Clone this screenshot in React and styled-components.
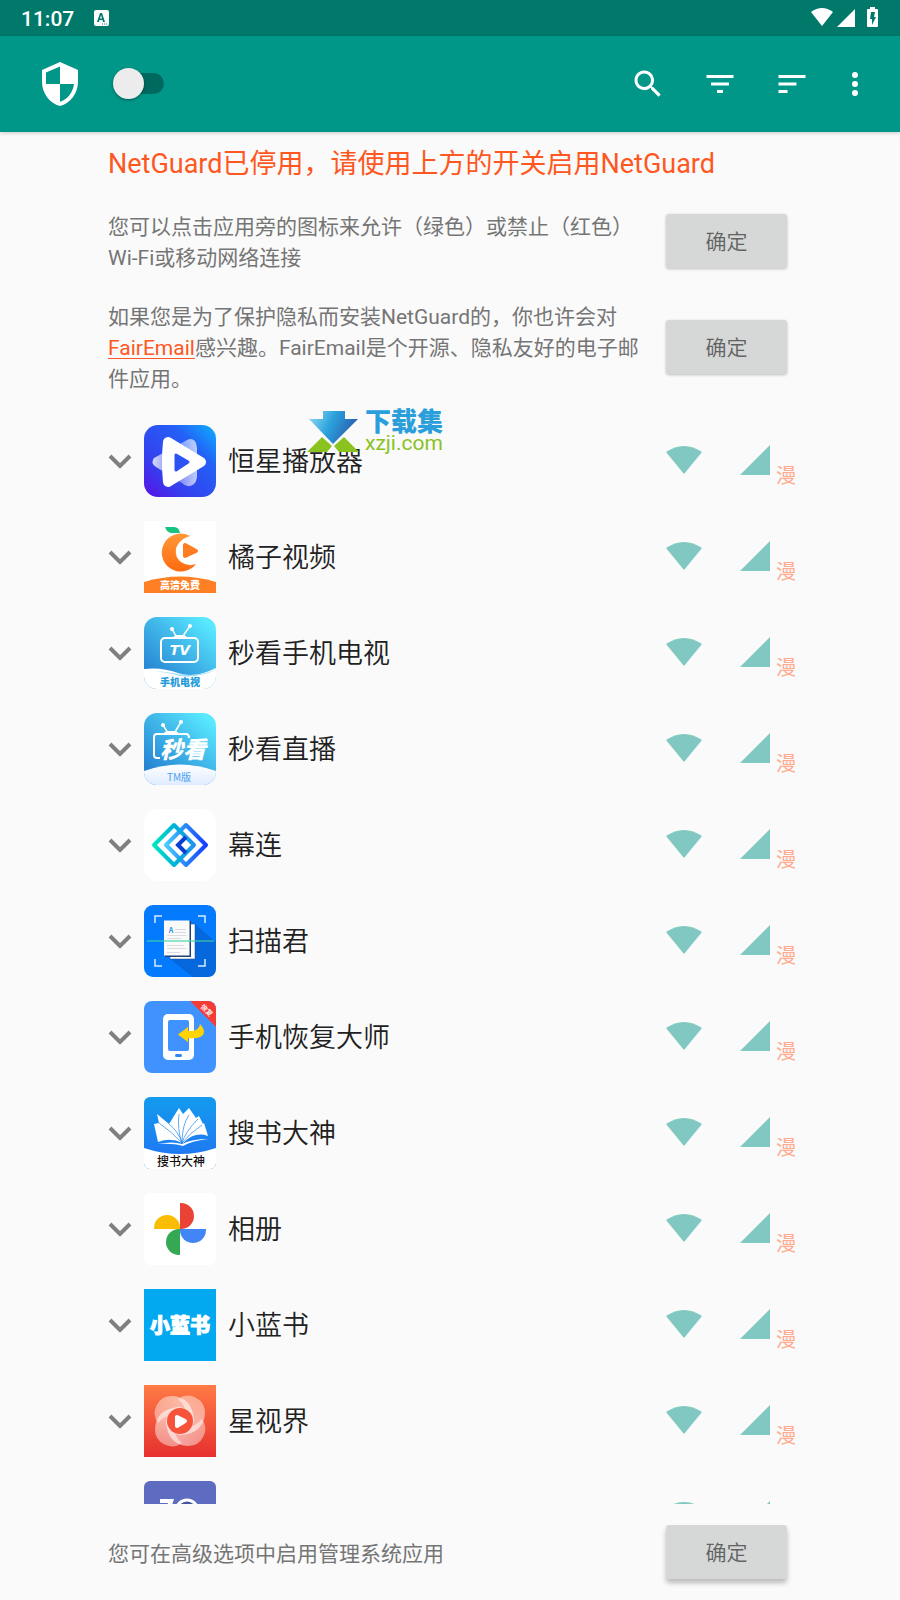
import { useState } from "react"
import styled, { createGlobalStyle } from "styled-components"

const cjk = '"Noto Sans CJK SC", sans-serif'

const StarPlayer = () => (
    <AppIcon viewBox="0 0 72 72">
        <defs>
            <linearGradient id="star" x1="0" y1="1" x2="1" y2="0">
                <stop offset="0" stopColor="#5a10e6" />
                <stop offset="0.3" stopColor="#3540ee" />
                <stop offset="0.7" stopColor="#2460f6" />
                <stop offset="1" stopColor="#0db0ff" />
            </linearGradient>
            <linearGradient id="starBack" x1="0" y1="0" x2="1" y2="0">
                <stop offset="0" stopColor="#fff" stopOpacity="0.8" />
                <stop offset="0.5" stopColor="#fff" stopOpacity="0.3" />
                <stop offset="1" stopColor="#fff" stopOpacity="0.7" />
            </linearGradient>
        </defs>
        <rect width="72" height="72" rx="14" fill="url(#star)" />
        <path d="M10 33 43 15q6-3 9 3l1 5v29q-1 8-7 9-4 1-8-3L12 42q-6-4-2-9z" fill="url(#starBack)" />
        <path d="M24 17q-2 20 0 40L57 37z" fill="#fff" stroke="#fff" strokeWidth="10" strokeLinejoin="round" />
        <path d="M32 30v15l12-8z" fill="#2d52f4" stroke="#2d52f4" strokeWidth="3" strokeLinejoin="round" />
    </AppIcon>
)

const OrangeVideo = () => (
    <AppIcon viewBox="0 0 72 72">
        <defs>
            <linearGradient id="orange" x1="0" y1="0" x2="0" y2="1">
                <stop offset="0" stopColor="#ff9838" />
                <stop offset="1" stopColor="#ff6a10" />
            </linearGradient>
        </defs>
        <rect width="72" height="72" fill="#fff" />
        <path d="M21 6h9q5 0 6 6h-8q-5 0-7-6z" fill="#16c47f" />
        <path d="M46 15a19 19 0 1 0 6 28q-8 3-15-2a13 13 0 0 1-2-19q4-5 11-7z" fill="url(#orange)" />
        <path d="M41 24v11l11-5z" fill="#ff7d22" stroke="#ff7d22" strokeWidth="4" strokeLinejoin="round" />
        <path d="M0 61q36-11 72 0v11H0z" fill="#ff8024" />
        <IconText x="36" y="68" size={10} weight={900}>高清免费</IconText>
    </AppIcon>
)

const PhoneTv = () => (
    <AppIcon viewBox="0 0 72 72">
        <defs>
            <linearGradient id="sky" x1="0.1" y1="0.8" x2="0.8" y2="0">
                <stop offset="0" stopColor="#2784d3" />
                <stop offset="0.5" stopColor="#3fb4e8" />
                <stop offset="1" stopColor="#58e9ff" />
            </linearGradient>
            <clipPath id="round"><rect width="72" height="72" rx="13" /></clipPath>
        </defs>
        <g clipPath="url(#round)">
            <rect width="72" height="72" fill="url(#sky)" />
            <path d="M0 52q18-2 34 4t38-5v21H0z" fill="#fff" />
            <path d="M0 54q20 0 34 3 18 3 38-4-18 8-36 6Q20 54 0 54z" fill="#9cdcf7" />
        </g>
        <rect x="17" y="21" width="37" height="24" rx="4" fill="none" stroke="#fff" strokeWidth="2" />
        <path d="m28 12 4 7m14-10-7 10" stroke="#fff" strokeWidth="1.5" />
        <circle cx="28" cy="12" r="2" fill="#fff" />
        <circle cx="46" cy="9" r="2" fill="#fff" />
        <path d="M29 21q1-3 4-3h6q3 0 4 3z" fill="#fff" />
        <IconText x="36" y="38" size={14} weight={700} slanted wide>TV</IconText>
        <IconText x="36" y="69" size={10} weight={900} fill="#259bdb">手机电视</IconText>
    </AppIcon>
)

const LiveTv = () => (
    <AppIcon viewBox="0 0 72 72">
        <defs>
            <linearGradient id="mist" x1="0" y1="0" x2="0" y2="1">
                <stop offset="0" stopColor="#fff" />
                <stop offset="1" stopColor="#dfebff" />
            </linearGradient>
        </defs>
        <g clipPath="url(#round)">
            <rect width="72" height="72" fill="url(#sky)" />
            <path d="M0 58q36-13 72 0v14H0z" fill="url(#mist)" />
        </g>
        <path d="M16 45h-3q-3 0-3-3V24q0-3 3-3h29q3 0 3 4" fill="none" stroke="#fff" strokeWidth="2" />
        <path d="m19 12 5 8m13-11-6 10" stroke="#fff" strokeWidth="1.5" />
        <circle cx="19" cy="12" r="2" fill="#fff" />
        <circle cx="37" cy="9" r="2" fill="#fff" />
        <path d="M19 21q2-3 5-3h6q4 0 5 3z" fill="#fff" />
        <IconText x="39" y="45" size={23} weight={900} slanted>秒看</IconText>
        <IconText x="35" y="68" size={10} weight={400} fill="#4ba2f5">TM版</IconText>
    </AppIcon>
)

const ScreenLink = () => (
    <AppIcon viewBox="0 0 72 72">
        <defs>
            <linearGradient id="teal" x1="0" y1="0" x2="1" y2="0">
                <stop offset="0" stopColor="#00e6c0" />
                <stop offset="0.5" stopColor="#00b4d8" />
                <stop offset="1" stopColor="#2492f0" />
            </linearGradient>
            <linearGradient id="blue" x1="0" y1="0" x2="1" y2="0">
                <stop offset="0" stopColor="#45ccff" />
                <stop offset="0.5" stopColor="#2b86f8" />
                <stop offset="1" stopColor="#163dff" />
            </linearGradient>
        </defs>
        <rect width="72" height="72" rx="14" fill="#fff" />
        <path d="m42 16 20 20-20 20-20-20z" fill="none" stroke="url(#blue)" strokeWidth="4" strokeLinejoin="round" />
        <path d="m30 16 20 20-20 20-20-20z" fill="none" stroke="url(#teal)" strokeWidth="4" strokeLinejoin="round" />
        <path d="m42 28-8 8 8 8" fill="none" stroke="#0b3fd4" strokeWidth="4" />
    </AppIcon>
)

const Scanner = () => (
    <AppIcon viewBox="0 0 72 72">
        <rect width="72" height="72" rx="9" fill="#047bff" />
        <path d="m51 19 21 18v26q0 9-9 9H49L26 54z" fill="#0567dc" />
        <path d="M11 18v-7h7m36 0h7v7m0 36v7h-7m-36 0h-7v-7" fill="none" stroke="#d5ecff" strokeWidth="1.5" />
        <path d="M26 19h25v35H26z" fill="#fff" stroke="#234a80" strokeWidth="0.5" />
        <path d="M21 16h26v36H21z" fill="#1f4372" />
        <path d="M20 15.5h25.5v35H20z" fill="#fafafa" />
        <path d="M31 24.5h11m-11 3h11m-19 3h19m-19 3h14m-14 7h17m-17 3h19m-19 4h13" stroke="#dcdce0" strokeWidth="1" />
        <IconText x="27" y="28" size={7} weight={700} fill="#1695e8">A</IconText>
        <path d="M3 36h67" stroke="#3bd5a0" strokeWidth="1.5" opacity="0.75" />
    </AppIcon>
)

const PhoneRestore = () => (
    <AppIcon viewBox="0 0 72 72">
        <defs>
            <clipPath id="corner"><rect width="72" height="72" rx="8" /></clipPath>
        </defs>
        <rect width="72" height="72" rx="8" fill="#4093ff" />
        <path d="M46 0h26v26z" fill="#f53b36" clipPath="url(#corner)" />
        <rect x="19" y="13" width="31" height="46" rx="5" fill="#fff" />
        <rect x="24" y="19" width="21" height="31" rx="2" fill="#4093ff" />
        <rect x="31" y="53" width="7" height="3" rx="1.5" fill="#2e85fa" />
        <path d="m34 33.5 10-7.5v4q11 1 12-7 8 9 0 13-4 2-12 1v4z" fill="#ffd400" />
        <g transform="rotate(45 63 9)">
            <IconText x="63" y="12" size={7} weight={500}>恢复</IconText>
        </g>
    </AppIcon>
)

const BookSearch = () => (
    <AppIcon viewBox="0 0 72 72">
        <defs>
            <linearGradient id="book" x1="0" y1="0" x2="0" y2="1">
                <stop offset="0" stopColor="#139bee" />
                <stop offset="0.8" stopColor="#1f79f2" />
            </linearGradient>
            <clipPath id="bookClip"><rect width="72" height="72" rx="6" /></clipPath>
        </defs>
        <g clipPath="url(#bookClip)">
            <rect width="72" height="72" fill="url(#book)" />
            <path d="M0 51q36 12 72 0v21H0z" fill="#fff" />
        </g>
        <path d="M38 46q-11-6-24-1L10 27l5-1-2-9 12 10 10-16 4 6 6-6 7 10 3-2 4 8 1-1 4 13q-13-5-25 7z" fill="#fff" />
        <path d="M14 47q15-3 24 0 10-5 26-5-17 2-25 7-10-3-25-2z" fill="#fff" />
        <path d="M38 46q-4-12-13-19m13 19q-11-12-23-20m23 20q-5-14-3-29m3 29q0-18 7-28m-7 28q3-11 16-24m-16 24q8-10 20-18" fill="none" stroke="#1d84ee" strokeWidth="0.7" />
        <IconText x="37" y="69" size={12} weight={500} fill="#111">搜书大神</IconText>
    </AppIcon>
)

const Photos = () => (
    <AppIcon viewBox="0 0 72 72">
        <rect width="72" height="72" rx="6" fill="#fff" />
        <path d="M36 10h1a13 13 0 0 1 0 26h-1z" fill="#ea4335" />
        <path d="M10 36v-1a13 13 0 0 1 26 0v1z" fill="#fbbc04" />
        <path d="M36 36h26v1a13 13 0 0 1-26 0z" fill="#4285f4" />
        <path d="M36 36v26h-1a13 13 0 0 1 0-26z" fill="#34a853" />
    </AppIcon>
)

const BlueBook = () => (
    <AppIcon viewBox="0 0 72 72">
        <rect width="72" height="72" fill="#02a9f0" />
        <IconText x="36" y="44" size={20} weight={900} outlined>小蓝书</IconText>
    </AppIcon>
)

const StarView = () => (
    <AppIcon viewBox="0 0 72 72">
        <defs>
            <linearGradient id="fire" x1="0" y1="0" x2="0" y2="1">
                <stop offset="0" stopColor="#ff7b45" />
                <stop offset="1" stopColor="#e6302f" />
            </linearGradient>
            <linearGradient id="petal" x1="0" y1="0" x2="1" y2="0.3">
                <stop offset="0" stopColor="#fff" stopOpacity="0.4" />
                <stop offset="1" stopColor="#fff" stopOpacity="0.6" />
            </linearGradient>
        </defs>
        <rect width="72" height="72" fill="url(#fire)" />
        {[0, 90, 180, 270].map((angle) => (
            <path
                key={angle}
                d="M14 38a17 17 0 0 1 14-27q20 1 22 24-1 6-4 9-4-15-18-14-8 1-14 8z"
                fill="url(#petal)"
                transform={`rotate(${angle} 36 36)`}
            />
        ))}
        <circle cx="36" cy="36" r="13" fill="#f6533a" />
        <path d="M33 32v9l8-5z" fill="#fff" stroke="#fff" strokeWidth="4" strokeLinejoin="round" />
    </AppIcon>
)

const SevenZip = () => (
    <AppIcon viewBox="0 0 72 72">
        <rect width="72" height="72" rx="6" fill="#5d6bc0" />
        <circle cx="43" cy="30" r="11" fill="#4653a0" stroke="#fff" strokeWidth="3" />
        <path d="M16 18h14L20 48h-5l9-26h-8z" fill="#fff" />
    </AppIcon>
)

const apps = [
    { name: "恒星播放器", Icon: StarPlayer },
    { name: "橘子视频", Icon: OrangeVideo },
    { name: "秒看手机电视", Icon: PhoneTv },
    { name: "秒看直播", Icon: LiveTv },
    { name: "幕连", Icon: ScreenLink },
    { name: "扫描君", Icon: Scanner },
    { name: "手机恢复大师", Icon: PhoneRestore },
    { name: "搜书大神", Icon: BookSearch },
    { name: "相册", Icon: Photos },
    { name: "小蓝书", Icon: BlueBook },
    { name: "星视界", Icon: StarView },
    { name: "", Icon: SevenZip },
]

const actions = [
    { label: "搜索", d: "M15.5 14h-.79l-.28-.27C15.41 12.59 16 11.11 16 9.5 16 5.91 13.09 3 9.5 3S3 5.91 3 9.5 5.91 16 9.5 16c1.61 0 3.09-.59 4.23-1.57l.27.28v.79l5 4.99L20.49 19l-4.99-5zm-6 0C7.01 14 5 11.99 5 9.5S7.01 5 9.5 5 14 7.01 14 9.5 11.99 14 9.5 14z" },
    { label: "筛选", d: "M10 18h4v-2h-4v2zM3 6v2h18V6H3zm3 7h12v-2H6v2z" },
    { label: "排序", d: "M3 18h6v-2H3v2zM3 6v2h18V6H3zm0 7h12v-2H3v2z" },
    { label: "更多", narrow: true, d: "M12 8a2 2 0 1 0 0-4 2 2 0 0 0 0 4zm0 2a2 2 0 1 0 0 4 2 2 0 0 0 0-4zm0 6a2 2 0 1 0 0 4 2 2 0 0 0 0-4z" },
]

const StatusIcons = () => (
    <svg width="68" height="22" viewBox="0 0 68 22" fill="#fff" aria-hidden="true">
        <path d="M0 5q11-8 22 0L11 19z" />
        <path d="M44 2v18H26z" />
        <path fillRule="evenodd" d="M59 0h5v2h2q1 0 1 1v16q0 1-1 1h-9q-1 0-1-1V3q0-1 1-1h2zM60 5l-1 7h2v6l4-8h-2l1-5z" />
    </svg>
)

const AppRow = ({ name, Icon }) => (
    <Row>
        <Expand aria-label={`展开 ${name}`}>
            <svg width="24" height="24" fill="none" stroke="#808080" strokeWidth="4">
                <path d="m2 7 10 10L22 7" />
            </svg>
        </Expand>
        <Icon />
        <Name>{name}</Name>
        <Network>
            <Access aria-label="Wi-Fi">
                <svg width="36" height="30" fill="#80c8c1">
                    <path d="M0 7q18-12 36 0L18 29z" />
                </svg>
            </Access>
            <Access aria-label="移动网络">
                <svg width="30" height="30" fill="#80c8c1">
                    <path d="M30 0v30H0z" />
                </svg>
            </Access>
            {name && <Roaming>漫</Roaming>}
        </Network>
    </Row>
)

const App = () => {
    const [enabled, setEnabled] = useState(false)

    return (
        <Screen>
            <GlobalStyle />
            <StatusBar>
                <time>11:07</time>
                <svg width="16" height="16" aria-hidden="true">
                    <rect width="15" height="16" rx="2" fill="#fff" />
                    <path fillRule="evenodd" d="m6 3-3 9h2l.5-2h3l.5 2h2L8 3zm1 2 1 3.500H6z" fill="#00796b" />
                    <path d="M8 14h1m1 0h1m1 0h1" stroke="#00796b" />
                </svg>
                <StatusIcons />
            </StatusBar>
            <Toolbar>
                <svg width="48" height="48" viewBox="0 0 24 24" fill="#fff" aria-hidden="true">
                    <path d="M12 1L3 5v6c0 5.550 3.840 10.740 9 12 5.160-1.260 9-6.450 9-12V5l-9-4zm0 10.990h7c-.53 4.120-3.280 7.790-7 8.940V12H5V6.300l7-3.110v8.800z" />
                </svg>
                <Switch
                    type="checkbox"
                    role="switch"
                    aria-label="启用NetGuard"
                    checked={enabled}
                    onChange={(e) => setEnabled(e.target.checked)}
                />
                <nav>
                    {actions.map((action) => (
                        <Action key={action.label} aria-label={action.label} $narrow={action.narrow}>
                            <svg width="36" height="36" viewBox="0 0 24 24" fill="#fff"><path d={action.d} /></svg>
                        </Action>
                    ))}
                </nav>
            </Toolbar>
            <Notices>
                <h1>NetGuard已停用，请使用上方的开关启用NetGuard</h1>
                <Hint>
                    <p>您可以点击应用旁的图标来允许（绿色）或禁止（红色）Wi-Fi或移动网络连接</p>
                    <Confirm>确定</Confirm>
                </Hint>
                <Hint>
                    <p>如果您是为了保护隐私而安装NetGuard的，你也许会对<a href="#fairemail">FairEmail</a>感兴趣。FairEmail是个开源、隐私友好的电子邮件应用。</p>
                    <Confirm>确定</Confirm>
                </Hint>
            </Notices>
            <ListArea>
                <List>
                    {apps.map((app, id) => <AppRow key={id} {...app} />)}
                </List>
                <Watermark>
                    <svg width="52" height="44" aria-hidden="true">
                        <defs>
                            <linearGradient id="arrow" x1="0" y1="0" x2="1" y2="0.3">
                                <stop offset="0" stopColor="#9bdcf2" />
                                <stop offset="0.5" stopColor="#2ba3dd" />
                                <stop offset="1" stopColor="#2a5fb0" />
                            </linearGradient>
                        </defs>
                        <path d="M16 1h22v8h13L26 34 2 9h14z" fill="url(#arrow)" />
                        <path d="m15 27 10 9-5 6H0zm22 0L27 36l5 6h20z" fill="#8ac31f" />
                    </svg>
                    <div>
                        <strong>下载集</strong>
                        <span>xzji.com</span>
                    </div>
                </Watermark>
            </ListArea>
            <Footer>
                <Hint>
                    <p>您可在高级选项中启用管理系统应用</p>
                    <Confirm $raised>确定</Confirm>
                </Hint>
            </Footer>
        </Screen>
    )
}

const GlobalStyle = createGlobalStyle`
    *{
        box-sizing: border-box;
    }
    body{
        margin: 0;
        background: #fafafa;
        color: #212121;
        font-family: Roboto, ${cjk};
    }
    button{
        border: 0;
        padding: 0;
        background: none;
        font: inherit;
        color: inherit;
        cursor: pointer;
    }
    h1, p, ul{
        margin: 0;
        padding: 0;
    }
    svg{
        display: block;
        flex: none;
    }
`

const Screen = styled.div`
    display: flex;
    flex-direction: column;
    height: 100vh;
`

const StatusBar = styled.header`
    display: flex;
    align-items: center;
    gap: 20px;
    flex: none;
    height: 36px;
    padding: 0 21px;
    background: #00796b;
    color: #fff;
    font-size: 22px;
    font-weight: 500;

    time{
        padding-top: 2px;
        font-size: 21px;
        line-height: 24px;
    }
    svg:last-child{
        margin-left: auto;
    }
`

const Toolbar = styled.header`
    display: flex;
    align-items: center;
    flex: none;
    height: 96px;
    padding: 0 18px 0 36px;
    background: #009688;
    box-shadow: 0 1px 4px rgba(0, 0, 0, 0.2);

    nav{
        display: flex;
        margin-left: auto;
    }
`

const Switch = styled.input`
    appearance: none;
    display: flex;
    align-items: center;
    width: 46px;
    height: 21px;
    margin: 0 0 2px 34px;
    border-radius: 11px;
    background: #00695f;
    cursor: pointer;

    &::before{
        content: "";
        flex: none;
        width: 31px;
        height: 31px;
        margin-left: ${(props) => (props.checked ? "20px" : "-5px")};
        border-radius: 50%;
        background: #ececec;
        box-shadow: 0 1px 3px rgba(0, 0, 0, 0.4);
    }
`

const Action = styled.button`
    display: grid;
    place-items: center;
    width: ${(props) => (props.$narrow ? "54px" : "72px")};
    height: 72px;
`

const Notices = styled.section`
    display: flex;
    flex-direction: column;
    gap: 26px;
    flex: none;
    padding: 16px 113px 18px 108px;

    h1{
        margin-bottom: 4px;
        color: #ff5722;
        font-size: 27px;
        font-weight: 400;
        line-height: 32px;
    }
`

const Hint = styled.div`
    display: flex;
    align-items: center;
    gap: 18px;

    p{
        flex: 1;
        padding-top: 2px;
        color: #757575;
        font-size: 21px;
        line-height: 31px;
    }
    a{
        color: #ff5722;
        text-decoration-thickness: 1px;
        text-underline-offset: 3px;
    }
`

const Confirm = styled.button`
    flex: none;
    width: 121px;
    height: 54px;
    margin-bottom: 2px;
    && {
        padding-bottom: 2px;
        border-radius: 3px;
        background: #d6d8d7;
        color: #616262;
        font-size: 21px;
        font-weight: 350;
        box-shadow: ${(props) => (props.$raised ? "0 4px 5px rgba(0, 0, 0, 0.25)" : "0 1px 3px rgba(0, 0, 0, 0.25)")};
    }
`

const ListArea = styled.main`
    position: relative;
    flex: 1;
    min-height: 0;
`

const List = styled.ul`
    height: 100%;
    overflow-y: auto;
    scrollbar-width: none;
    list-style: none;
`

const Row = styled.li`
    display: flex;
    align-items: center;
    gap: 12px;
    height: 96px;
    padding: 0 103px 0 108px;
`

const Expand = styled.button`
    flex: none;
`

const AppIcon = styled.svg`
    width: 72px;
    height: 72px;
`

const IconText = styled.text`
    font-family: ${(props) => (props.wide ? '"DejaVu Sans", sans-serif' : cjk)};
    font-size: ${(props) => props.size}px;
    font-weight: ${(props) => props.weight};
    font-style: ${(props) => (props.slanted ? "italic" : "normal")};
    fill: ${(props) => props.fill || "#fff"};
    stroke: ${(props) => (props.outlined ? "#fff" : "none")};
    text-anchor: middle;
`

const Name = styled.span`
    flex: 1;
    padding-top: 2px;
    font-size: 27px;
    font-weight: 350;
    line-height: 40px;
`

const Network = styled.div`
    display: flex;
    align-items: center;
    flex: none;
    height: 50px;
    padding-right: 21px;

    &:has(span){
        padding-right: 0;
    }
`

const Access = styled.button`
    margin-bottom: 2px;

    & + &{
        margin-left: 38px;
    }
    &:last-child{
        margin-right: 6px;
    }
`

const Roaming = styled.span`
    align-self: flex-end;
    width: 21px;
    margin-left: 6px;
    color: #ffab91;
    font-size: 20px;
    line-height: 20px;
`

const Watermark = styled.div`
    position: absolute;
    top: -3px;
    left: 307px;
    display: flex;
    gap: 6px;
    pointer-events: none;

    div{
        display: flex;
        flex-direction: column;
    }
    strong{
        color: #2a9fdb;
        font-size: 26px;
        font-weight: 900;
        line-height: 25px;
    }
    span{
        color: #8ac31f;
        font-size: 21px;
        line-height: 16px;
    }
`

const Footer = styled.footer`
    display: flex;
    flex-direction: column;
    justify-content: center;
    flex: none;
    height: 96px;
    padding: 2px 113px 0 108px;
`

export default App
